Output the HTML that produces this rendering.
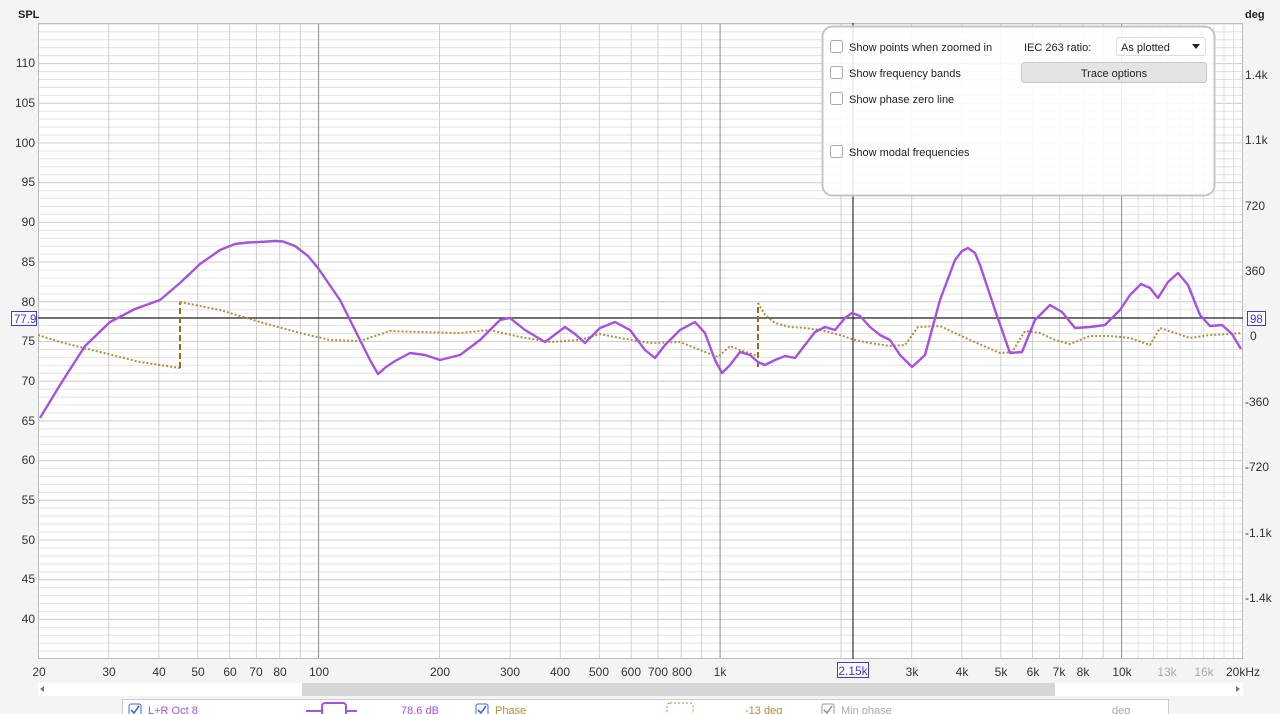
<!DOCTYPE html>
<html><head><meta charset="utf-8"><style>
html,body{margin:0;padding:0;background:#f4f4f4;width:1280px;height:714px;overflow:hidden;font-family:"Liberation Sans",sans-serif;}
svg text{font-family:"Liberation Sans",sans-serif;}
</style></head><body>
<svg width="1280" height="714" viewBox="0 0 1280 714" xmlns="http://www.w3.org/2000/svg">
<defs>
<pattern id="h1" x="0" y="23.4" width="10" height="7.94" patternUnits="userSpaceOnUse"><line x1="0" y1="0.5" x2="10" y2="0.5" stroke="#e2e2e2" stroke-width="1"/></pattern>
<pattern id="h5" x="0" y="23.4" width="10" height="39.7" patternUnits="userSpaceOnUse"><line x1="0" y1="0.5" x2="10" y2="0.5" stroke="#d0d0d0" stroke-width="1"/></pattern>
</defs>
<rect x="38" y="23" width="1205" height="636" fill="#fff"/>
<rect x="38" y="23" width="1205" height="636" fill="url(#h1)"/>
<rect x="38" y="23" width="1205" height="636" fill="url(#h5)"/>
<g stroke="#cfcfcf" stroke-width="1">
<line x1="108.7" y1="23" x2="108.7" y2="659"/><line x1="158.9" y1="23" x2="158.9" y2="659"/><line x1="197.8" y1="23" x2="197.8" y2="659"/><line x1="229.6" y1="23" x2="229.6" y2="659"/><line x1="256.4" y1="23" x2="256.4" y2="659"/><line x1="279.7" y1="23" x2="279.7" y2="659"/><line x1="300.3" y1="23" x2="300.3" y2="659"/>
<line x1="439.5" y1="23" x2="439.5" y2="659"/><line x1="510.2" y1="23" x2="510.2" y2="659"/><line x1="560.3" y1="23" x2="560.3" y2="659"/><line x1="599.3" y1="23" x2="599.3" y2="659"/><line x1="631.1" y1="23" x2="631.1" y2="659"/><line x1="657.9" y1="23" x2="657.9" y2="659"/><line x1="681.2" y1="23" x2="681.2" y2="659"/><line x1="701.7" y1="23" x2="701.7" y2="659"/>
<line x1="841" y1="23" x2="841" y2="659"/><line x1="911.7" y1="23" x2="911.7" y2="659"/><line x1="961.8" y1="23" x2="961.8" y2="659"/><line x1="1000.8" y1="23" x2="1000.8" y2="659"/><line x1="1032.6" y1="23" x2="1032.6" y2="659"/><line x1="1059.4" y1="23" x2="1059.4" y2="659"/><line x1="1082.7" y1="23" x2="1082.7" y2="659"/><line x1="1103.2" y1="23" x2="1103.2" y2="659"/>
</g>
<g stroke="#e0e0e0" stroke-width="1">
<line x1="1138.2" y1="23" x2="1138.2" y2="659"/><line x1="1153.4" y1="23" x2="1153.4" y2="659"/><line x1="1167.3" y1="23" x2="1167.3" y2="659"/><line x1="1180.2" y1="23" x2="1180.2" y2="659"/><line x1="1192.2" y1="23" x2="1192.2" y2="659"/><line x1="1203.5" y1="23" x2="1203.5" y2="659"/><line x1="1214" y1="23" x2="1214" y2="659"/><line x1="1224" y1="23" x2="1224" y2="659"/><line x1="1233.5" y1="23" x2="1233.5" y2="659"/>
</g>
<g stroke="#8a8a8a" stroke-width="1">
<line x1="318.6" y1="23" x2="318.6" y2="659"/><line x1="720.1" y1="23" x2="720.1" y2="659"/><line x1="1121.6" y1="23" x2="1121.6" y2="659"/>
</g>
<rect x="38.5" y="23.5" width="1204" height="635" fill="none" stroke="#bcbcbc"/>
<line x1="853" y1="23" x2="853" y2="659" stroke="#333" stroke-width="1.2"/>
<line x1="38" y1="318" x2="1243" y2="318" stroke="#222" stroke-width="1.2"/>
<polyline fill="none" stroke="#b58d3c" stroke-width="2" stroke-dasharray="2,2" points="38,335 60,342 100,352 140,362 180,368"/>
<line x1="180" y1="368" x2="180" y2="302" stroke="#9a6a1c" stroke-width="2" stroke-dasharray="6,3"/>
<polyline fill="none" stroke="#b58d3c" stroke-width="2" stroke-dasharray="2,2" points="180,302 220,310 260,322 300,333 330,340 360,341 390,331 420,332 460,333 490,330 520,337 550,342 580,340 600,334 620,338 650,343 680,342 700,350 718,357 730,346 740,350 758,356"/>
<line x1="758" y1="367" x2="758" y2="303" stroke="#9a6a1c" stroke-width="2" stroke-dasharray="6,3"/>
<polyline fill="none" stroke="#b58d3c" stroke-width="2" stroke-dasharray="2,2" points="758,303 765,315 775,323 790,327 805,328 820,330 840,335 855,340 870,343 890,346 905,345 918,327 940,326 970,340 1000,353 1012,352 1025,331 1040,333 1055,340 1070,344 1090,336 1110,336 1130,338 1150,345 1160,328 1175,333 1190,338 1210,335 1230,334 1242,333"/>
<polyline fill="none" stroke="#a553dd" stroke-width="2.4" stroke-linejoin="round" points="40,418 60,385 85,346 110,322 135,309 160,300 180,283 200,264 220,250 235,244 248,242.5 260,242 275,241 283,241.5 295,246 308,256 318,268 340,300 360,340 370,360 378,374 386,367 395,361 410,353 425,355 440,360 460,355 480,340 493,327 500,320 510,318 525,330 545,342 565,327 575,334 585,343 600,328 615,322 630,330 645,350 655,358 665,345 680,330 695,322 705,333 715,360 722,373 730,365 740,352 750,355 758,362 765,365 775,360 785,356 795,358 805,345 815,332 825,327 835,330 845,318 852,313 860,316 870,327 880,335 890,340 900,355 912,367 925,355 940,300 955,260 962,251 968,248 975,253 980,265 995,310 1010,353 1022,352 1035,320 1050,305 1062,312 1075,328 1090,327 1105,325 1120,310 1130,295 1141,284 1150,288 1158,298 1168,282 1178,273 1188,285 1200,315 1210,326 1222,325 1232,334 1241,349"/>
<g font-size="12" fill="#333" text-anchor="end">
<text x="35" y="67">110</text><text x="35" y="107">105</text><text x="35" y="147">100</text><text x="35" y="186">95</text><text x="35" y="226">90</text><text x="35" y="266">85</text><text x="35" y="306">80</text><text x="35" y="345">75</text><text x="35" y="385">70</text><text x="35" y="425">65</text><text x="35" y="464">60</text><text x="35" y="504">55</text><text x="35" y="544">50</text><text x="35" y="583">45</text><text x="35" y="623">40</text>
</g>
<text x="18" y="18" font-size="11" fill="#222" font-weight="bold">SPL</text>
<text x="1245" y="18" font-size="11" fill="#222" font-weight="bold">deg</text>
<rect x="11.5" y="311.5" width="25" height="14" fill="#fff" stroke="#3b3bd9"/>
<text x="14" y="323" font-size="11.5" fill="#3b3bd9">77.9</text>
<g font-size="12" fill="#333">
<text x="1245" y="79">1.4k</text><text x="1245" y="144">1.1k</text><text x="1245" y="210">720</text><text x="1245" y="275">360</text><text x="1250" y="340">0</text><text x="1245" y="406">-360</text><text x="1245" y="471">-720</text><text x="1245" y="537">-1.1k</text><text x="1245" y="602">-1.4k</text>
</g>
<rect x="1247.5" y="311.5" width="18" height="14" fill="#fff" stroke="#3b3bd9"/>
<text x="1250" y="323" font-size="11.5" fill="#3b3bd9">98</text>
<g font-size="12" fill="#333" text-anchor="middle">
<text x="39" y="676">20</text><text x="109" y="676">30</text><text x="159" y="676">40</text><text x="198" y="676">50</text><text x="230" y="676">60</text><text x="256" y="676">70</text><text x="280" y="676">80</text><text x="319" y="676">100</text><text x="440" y="676">200</text><text x="510" y="676">300</text><text x="560" y="676">400</text><text x="599" y="676">500</text><text x="631" y="676">600</text><text x="658" y="676">700</text><text x="682" y="676">800</text><text x="720" y="676">1k</text><text x="912" y="676">3k</text><text x="962" y="676">4k</text><text x="1001" y="676">5k</text><text x="1033" y="676">6k</text><text x="1059" y="676">7k</text><text x="1083" y="676">8k</text><text x="1122" y="676">10k</text><text x="1167" y="676" fill="#aaa">13k</text><text x="1204" y="676" fill="#aaa">16k</text><text x="1243" y="676">20kHz</text>
</g>
<rect x="837.5" y="662.5" width="31" height="15" fill="#fff" stroke="#3b3bd9"/>
<text x="853" y="675" font-size="12" fill="#3b3bd9" text-anchor="middle">2.15k</text>
<rect x="38" y="683" width="1205" height="13" fill="#fff"/>
<rect x="302" y="683" width="753" height="13" fill="#d6d6d6"/>
<polygon points="44,686 44,692 40,689" fill="#777"/>
<polygon points="1236,686 1236,692 1240,689" fill="#777"/>
<rect x="122.5" y="699.5" width="1046" height="20" fill="#fff" stroke="#ccc"/>
<rect x="129" y="704" width="12" height="12" fill="#fff" stroke="#3b6fd9" rx="2"/>
<path d="M131,710 L134,713 L139,706" fill="none" stroke="#3b6fd9" stroke-width="1.6"/>
<text x="148" y="714" font-size="11" fill="#a553dd">L+R Oct 8</text>
<rect x="322" y="703" width="24" height="14" fill="#fff" stroke="#a553dd" stroke-width="2" rx="3"/>
<line x1="306" y1="711" x2="322" y2="711" stroke="#a553dd" stroke-width="2"/><line x1="346" y1="711" x2="357" y2="711" stroke="#a553dd" stroke-width="2"/>
<text x="401" y="714" font-size="11" fill="#a553dd">78.6 dB</text>
<rect x="476" y="704" width="12" height="12" fill="#fff" stroke="#3b6fd9" rx="2"/>
<path d="M478,710 L481,713 L486,706" fill="none" stroke="#3b6fd9" stroke-width="1.6"/>
<text x="495" y="714" font-size="11" fill="#b58d3c">Phase</text>
<rect x="667" y="703" width="26" height="14" fill="#fff" stroke="#b58d3c" stroke-dasharray="2,2" rx="3"/>
<text x="745" y="714" font-size="11" fill="#b58d3c">-13 deg</text>
<rect x="822" y="704" width="12" height="12" fill="#fff" stroke="#999" rx="2"/>
<path d="M824,710 L827,713 L832,706" fill="none" stroke="#999" stroke-width="1.6"/>
<text x="841" y="714" font-size="11" fill="#aaa">Min phase</text>
<text x="1112" y="714" font-size="11" fill="#aaa">deg</text>
<rect x="822.5" y="26.5" width="392" height="169" rx="10" fill="#fff" fill-opacity="0.86" stroke="#c4c4c4" stroke-width="2"/>
<g fill="#fff" stroke="#aaa">
<rect x="830.5" y="40.5" width="12" height="12" rx="2"/><rect x="830.5" y="66.5" width="12" height="12" rx="2"/><rect x="830.5" y="92.5" width="12" height="12" rx="2"/><rect x="830.5" y="145.5" width="12" height="12" rx="2"/>
</g>
<g font-size="11" fill="#222">
<text x="849" y="51">Show points when zoomed in</text>
<text x="849" y="77">Show frequency bands</text>
<text x="849" y="103">Show phase zero line</text>
<text x="849" y="156">Show modal frequencies</text>
<text x="1024" y="51">IEC 263 ratio:</text>
</g>
<rect x="1116.5" y="37.5" width="89" height="18" rx="3" fill="#fff" stroke="#ddd"/>
<text x="1121" y="51" font-size="11" fill="#222">As plotted</text>
<polygon points="1192,44 1200,44 1196,49" fill="#222"/>
<rect x="1021.5" y="62.5" width="185" height="20" rx="3" fill="#e4e4e4" stroke="#c8c8c8"/>
<text x="1114" y="77" font-size="11" fill="#222" text-anchor="middle">Trace options</text>
</svg>
</body></html>
